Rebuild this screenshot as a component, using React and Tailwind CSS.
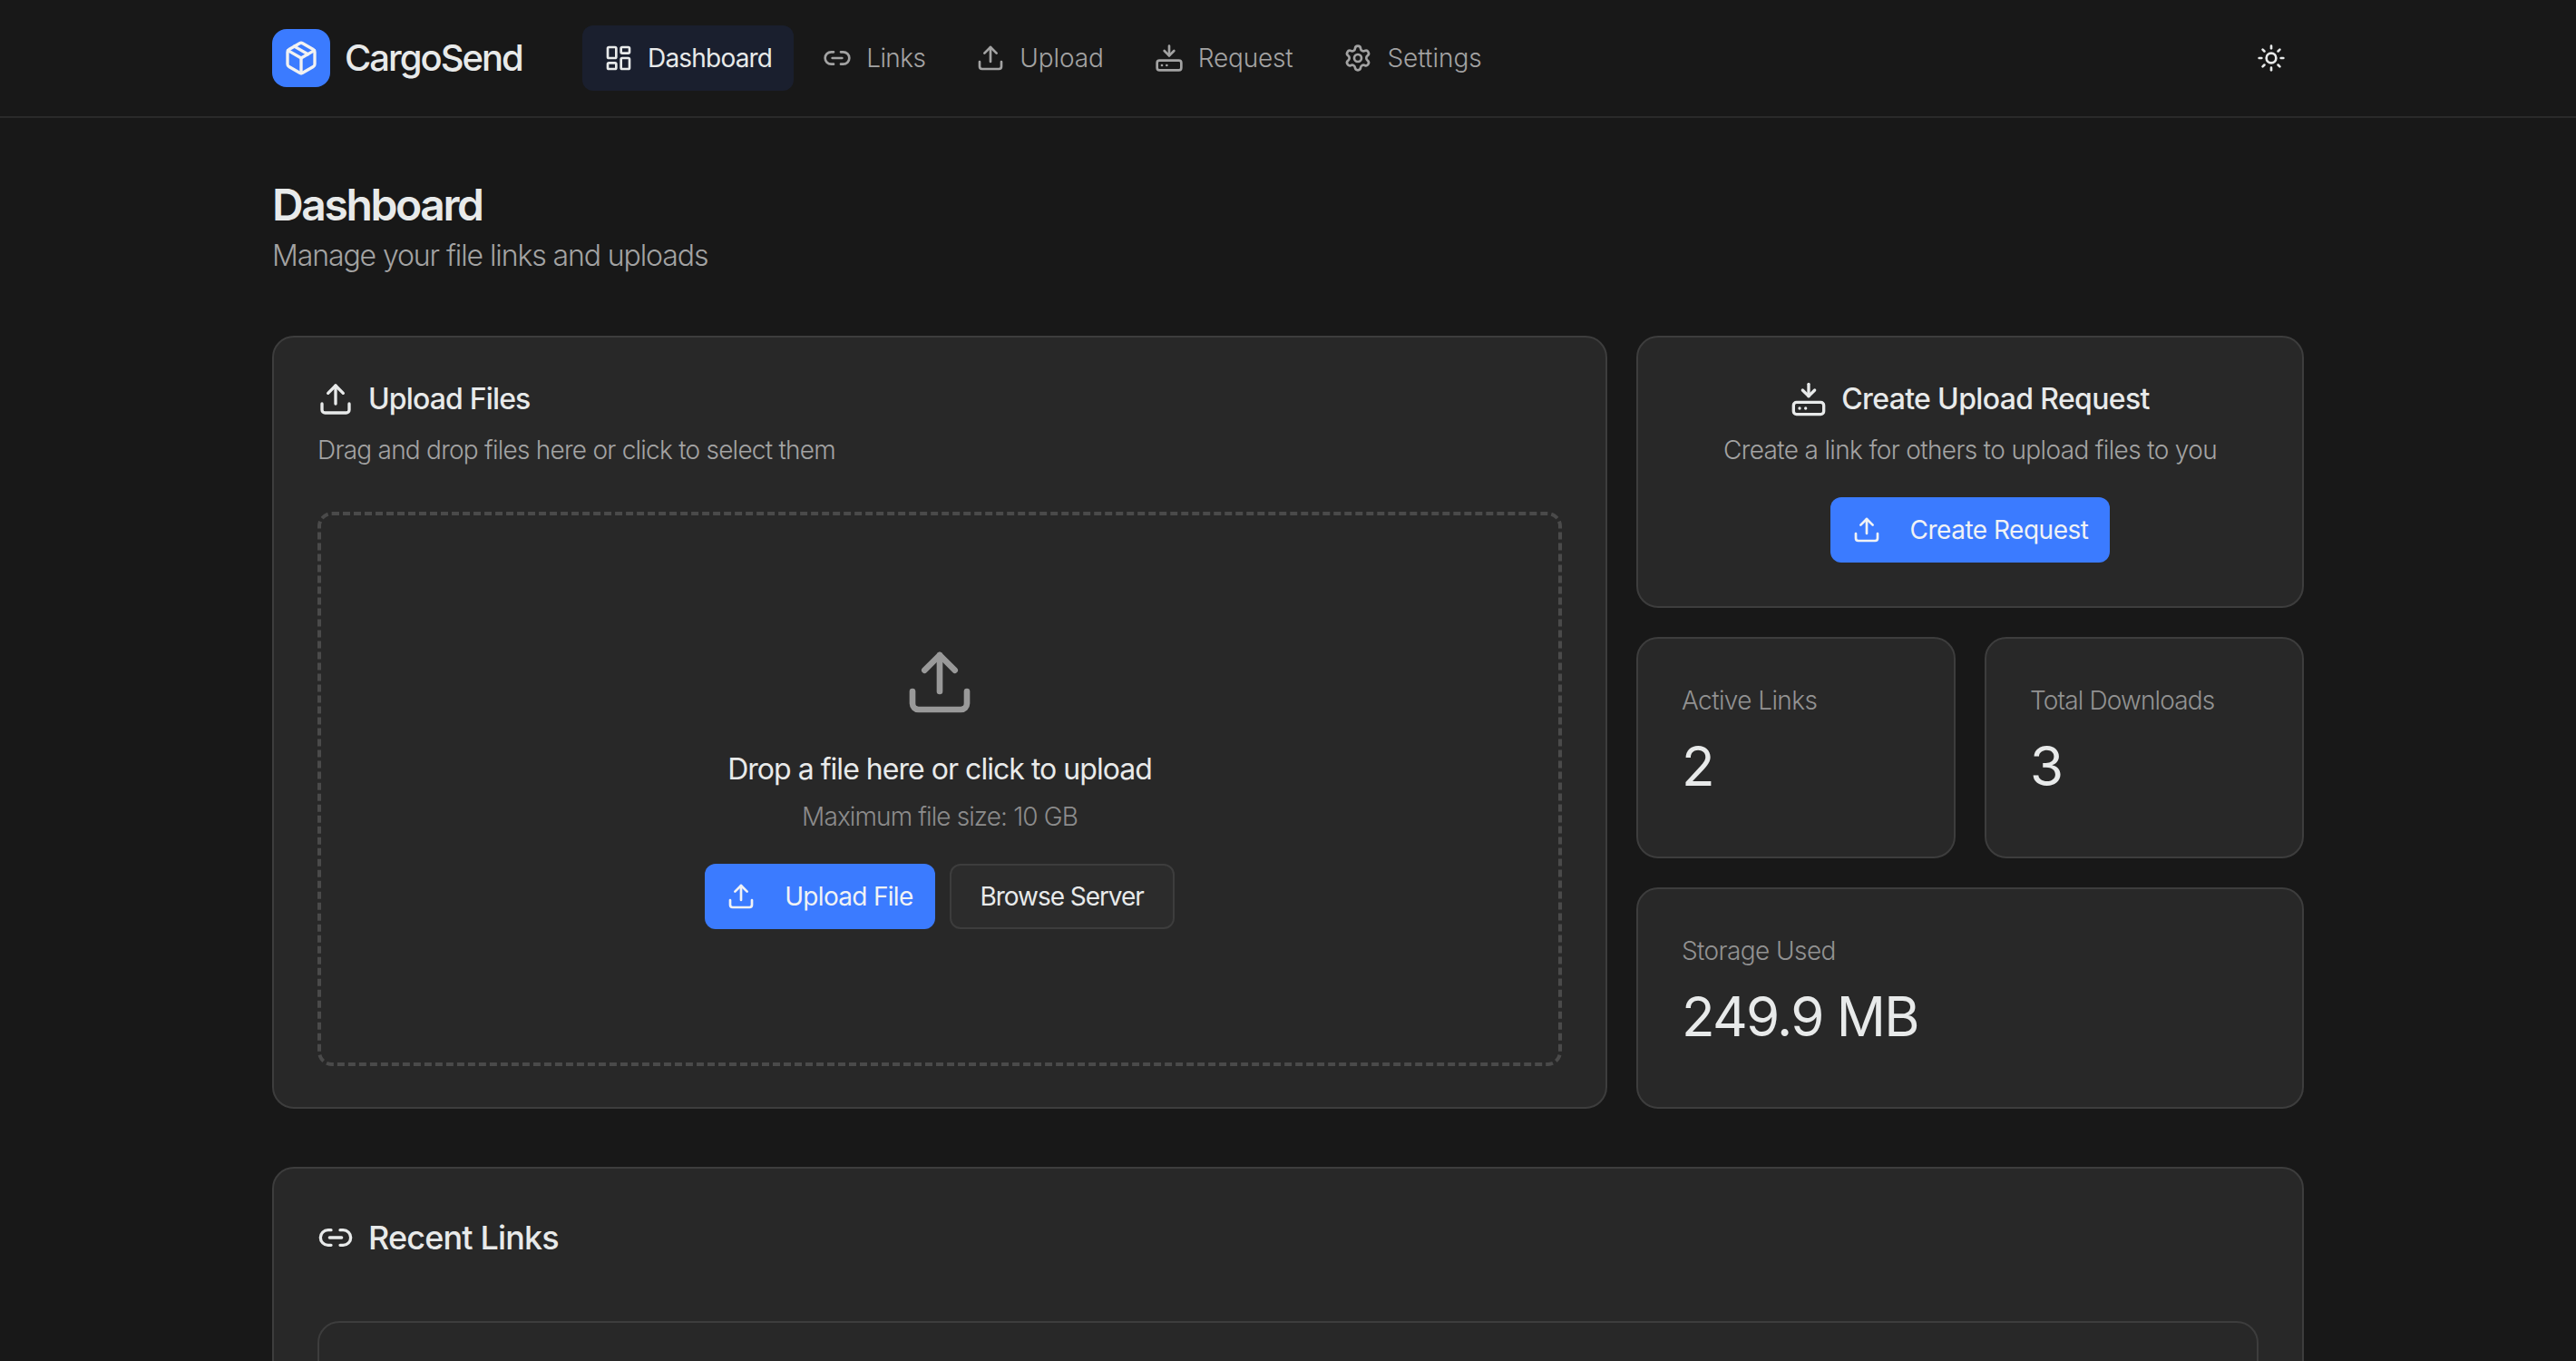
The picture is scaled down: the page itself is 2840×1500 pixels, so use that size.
import React from "react";
import { LayoutDashboard, Link2, Upload, HardDriveDownload, Settings, Sun, Package } from "lucide-react";

const font = "font-['Inter','Liberation_Sans',sans-serif]";

function NavItem({ icon: Icon, label, active, track }) {
  return (
    <a
      className={
        active
          ? `flex h-[72px] items-center gap-4 rounded-xl bg-[#1a1f2e] px-6 text-[28px] font-normal text-[#e8eaea] ${track}`
          : `flex h-[72px] items-center gap-4 rounded-xl px-6 text-[28px] font-light text-[#a3a3a3] ${track}`
      }
    >
      <Icon size={32} strokeWidth={2} />
      <span>{label}</span>
    </a>
  );
}

function Stat({ label, value, labelTrack, valueTrack }) {
  return (
    <div className="rounded-3xl border-2 border-[#3d3d3d] bg-[#282828] p-12">
      <div className={`h-10 text-[28px] font-light leading-10 text-[#929292] ${labelTrack}`}>{label}</div>
      <div className={`mt-4 text-[60px] font-normal leading-[72px] text-[#e8eaea] ${valueTrack}`}>{value}</div>
    </div>
  );
}

export default function App() {
  return (
    <div className={`${font} h-screen overflow-hidden bg-[#181818]`}>
      <header className="h-[130px] border-b-2 border-[#2a2a2a]">
        <div className="mx-auto flex h-32 w-[2240px] items-center">
          <div className="flex w-[342px] items-center">
            <div className="flex h-16 w-16 items-center justify-center rounded-2xl bg-[#3b7bff] text-[#f2f2f2]">
              <Package size={40} strokeWidth={2} />
            </div>
            <span className="ml-4 text-[40px] font-medium tracking-[-2px] text-[#e8eaea]">CargoSend</span>
          </div>
          <nav className="flex items-center gap-2">
            <NavItem icon={LayoutDashboard} label="Dashboard" active track="tracking-[-0.8px]" />
            <NavItem icon={Link2} label="Links" track="tracking-[-0.6px]" />
            <NavItem icon={Upload} label="Upload" track="tracking-[-0.1px]" />
            <NavItem icon={HardDriveDownload} label="Request" track="tracking-[-0.2px]" />
            <NavItem icon={Settings} label="Settings" track="tracking-[0px]" />
          </nav>
          <button className="ml-auto flex h-[72px] w-[72px] items-center justify-center text-[#e8eaea]">
            <Sun size={32} strokeWidth={2} />
          </button>
        </div>
      </header>

      <main className="mx-auto w-[2240px] pt-16">
        <h1 className="text-[48px] font-semibold leading-[64px] tracking-[-2.4px] text-[#e8eaea]">Dashboard</h1>
        <p className="text-[32px] font-light leading-[48px] tracking-[-1.1px] text-[#a3a3a3]">Manage your file links and uploads</p>

        <div className="mt-16 grid grid-cols-[1fr_736px] gap-8">
          <section className="flex flex-col rounded-3xl border-2 border-[#3d3d3d] bg-[#282828] p-12">
            <div className="flex h-10 items-center gap-4 text-[32px] font-medium tracking-[-0.85px] text-[#e8eaea]">
              <Upload size={40} strokeWidth={2} />
              <span>Upload Files</span>
            </div>
            <p className="mt-4 h-10 text-[28px] font-light leading-10 tracking-[-0.76px] text-[#a3a3a3]">Drag and drop files here or click to select them</p>
            <div className="mt-12 -mb-[3px] flex flex-1 flex-col items-center justify-center rounded-2xl border-4 border-dashed border-[#4a4a4a] pb-[3px]">
              <Upload size={80} strokeWidth={2} className="text-[#999999]" />
              <p className="mt-8 text-[32px] font-normal leading-[48px] tracking-[-0.97px] text-[#e8eaea]">Drop a file here or click to upload</p>
              <p className="mt-2 text-[28px] font-light leading-10 tracking-[-0.88px] text-[#8c8c8c]">Maximum file size: 10 GB</p>
              <div className="mt-8 flex gap-4">
                <button className="flex h-[72px] items-center gap-8 rounded-xl bg-[#3b7bff] px-6 text-[28px] font-normal tracking-[-0.7px] text-[#f0f2f5]">
                  <Upload size={32} strokeWidth={2} />
                  <span>Upload File</span>
                </button>
                <button className="h-[72px] rounded-xl border-2 border-[#3d3d3d] bg-[#2c2c2c] px-8 text-[28px] font-normal tracking-[-1.05px] text-[#e8eaea]">Browse Server</button>
              </div>
            </div>
          </section>

          <div className="flex flex-col gap-8">
            <section className="flex flex-col items-center rounded-3xl border-2 border-[#3d3d3d] bg-[#282828] p-12">
              <div className="flex h-10 items-center gap-4 text-[32px] font-medium tracking-[-0.65px] text-[#e8eaea]">
                <HardDriveDownload size={40} strokeWidth={2} />
                <span>Create Upload Request</span>
              </div>
              <p className="mt-4 h-10 text-[28px] font-light leading-10 tracking-[-0.65px] text-[#a3a3a3]">Create a link for others to upload files to you</p>
              <button className="mt-8 flex h-[72px] items-center gap-8 rounded-xl bg-[#3b7bff] px-6 text-[28px] font-normal tracking-[-0.5px] text-[#f0f2f5]">
                <Upload size={32} strokeWidth={2} />
                <span>Create Request</span>
              </button>
            </section>
            <div className="grid h-[244px] grid-cols-2 gap-8">
              <Stat label="Active Links" value="2" labelTrack="tracking-[-0.6px]" valueTrack="tracking-[-1px]" />
              <Stat label="Total Downloads" value="3" labelTrack="tracking-[-0.85px]" valueTrack="tracking-[-1px]" />
            </div>
            <div className="grid h-[244px]">
              <Stat label="Storage Used" value="249.9 MB" labelTrack="tracking-[-0.6px]" valueTrack="tracking-[-1.7px]" />
            </div>
          </div>
        </div>

        <section className="mt-[64px] rounded-3xl border-2 border-[#3d3d3d] bg-[#282828] p-12">
          <div className="mt-[4px] flex h-[48px] items-center gap-4 text-[36px] font-medium tracking-[-0.85px] text-[#e8eaea]">
            <Link2 size={40} strokeWidth={2} />
            <span>Recent Links</span>
          </div>
          <div className="mt-[68px] h-[400px] rounded-3xl border-2 border-[#3d3d3d]" />
        </section>
      </main>
    </div>
  );
}
